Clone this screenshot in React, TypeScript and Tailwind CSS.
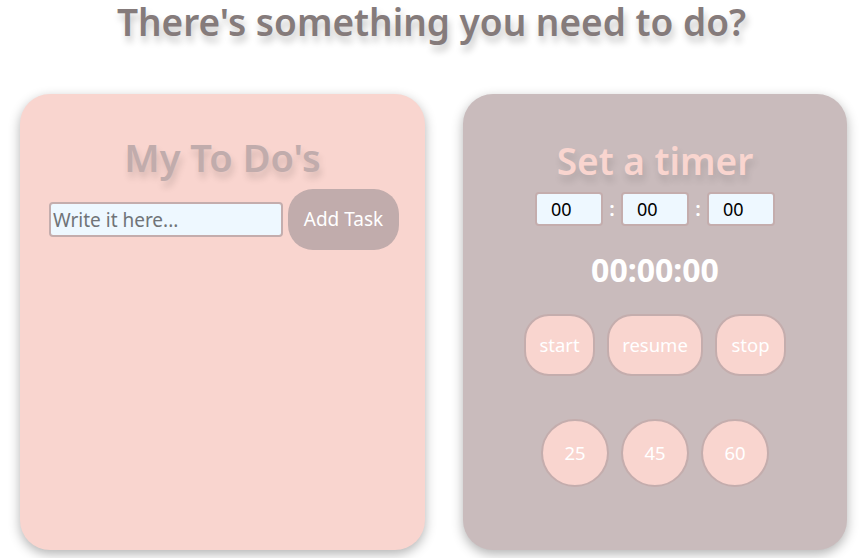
export default function App() {
  return (
    <div className="min-h-screen bg-white font-['Noto_Sans',sans-serif] overflow-hidden">
      {/* Header */}
      <h1 className="text-center text-[37px] leading-[44px] font-semibold text-[#857b7b] [text-shadow:2px_6px_7px_rgba(0,0,0,0.22)]">
        There's something you need to do?
      </h1>

      <div className="flex gap-[38px] pl-[20px] mt-[50px]">
        {/* To do card */}
        <div className="w-[405px] h-[456px] rounded-[30px] bg-[#f9d5cf] shadow-[0_4px_12px_rgba(0,0,0,0.3)] flex flex-col items-center pt-[38px]">
          <h2 className="text-[38px] leading-[50px] font-semibold text-[#c1acac] [text-shadow:2px_6px_7px_rgba(0,0,0,0.15)]">
            My To Do's
          </h2>
          <div className="flex items-center gap-[5px] mt-[7px] ml-[3px]">
            <input
              placeholder="Write it here..."
              className="w-[234px] h-[35px] bg-[#eef8ff] border-2 border-[#c4adad] rounded-[4px] px-[2px] text-[19px] text-[#555] placeholder:text-[#707478] outline-none"
            />
            <button className="w-[111px] h-[61px] rounded-[25px] bg-[#c1acac] text-white text-[19px]">
              Add Task
            </button>
          </div>
        </div>

        {/* Timer card */}
        <div className="w-[384px] h-[456px] rounded-[30px] bg-[#c9bbbc] shadow-[0_4px_12px_rgba(0,0,0,0.3)] flex flex-col items-center pt-[42px]">
          <h2 className="text-[37px] leading-[50px] font-semibold text-[#f9d5cf] [text-shadow:2px_6px_7px_rgba(0,0,0,0.12)]">
            Set a timer
          </h2>
          <div className="flex items-center mt-[6px]">
            <input
              defaultValue="00"
              className="w-[68px] h-[34px] bg-[#eef8ff] border-2 border-[#c4adad] rounded-[4px] pl-[14px] text-[18px] text-black outline-none"
            />
            <span className="w-[18px] text-center text-white text-[20px] font-semibold">:</span>
            <input
              defaultValue="00"
              className="w-[68px] h-[34px] bg-[#eef8ff] border-2 border-[#c4adad] rounded-[4px] pl-[14px] text-[18px] text-black outline-none"
            />
            <span className="w-[18px] text-center text-white text-[20px] font-semibold">:</span>
            <input
              defaultValue="00"
              className="w-[68px] h-[34px] bg-[#eef8ff] border-2 border-[#c4adad] rounded-[4px] pl-[14px] text-[18px] text-black outline-none"
            />
          </div>
          <div className="mt-[24px] text-[32px] leading-[40px] font-bold text-white">00:00:00</div>
          <div className="flex gap-[12px] mt-[24px]">
            <button className="w-[71px] h-[62px] rounded-[25px] bg-[#f9d5cf] border-2 border-[#c4adad] text-white text-[18.5px]">
              start
            </button>
            <button className="w-[96px] h-[62px] rounded-[25px] bg-[#f9d5cf] border-2 border-[#c4adad] text-white text-[18.5px]">
              resume
            </button>
            <button className="w-[71px] h-[62px] rounded-[25px] bg-[#f9d5cf] border-2 border-[#c4adad] text-white text-[18.5px]">
              stop
            </button>
          </div>
          <div className="flex gap-[12px] mt-[43px]">
            <button className="w-[68px] h-[68px] rounded-full bg-[#f9d5cf] border-2 border-[#c4adad] text-white text-[18.5px]">
              25
            </button>
            <button className="w-[68px] h-[68px] rounded-full bg-[#f9d5cf] border-2 border-[#c4adad] text-white text-[18.5px]">
              45
            </button>
            <button className="w-[68px] h-[68px] rounded-full bg-[#f9d5cf] border-2 border-[#c4adad] text-white text-[18.5px]">
              60
            </button>
          </div>
        </div>
      </div>
    </div>
  );
}
